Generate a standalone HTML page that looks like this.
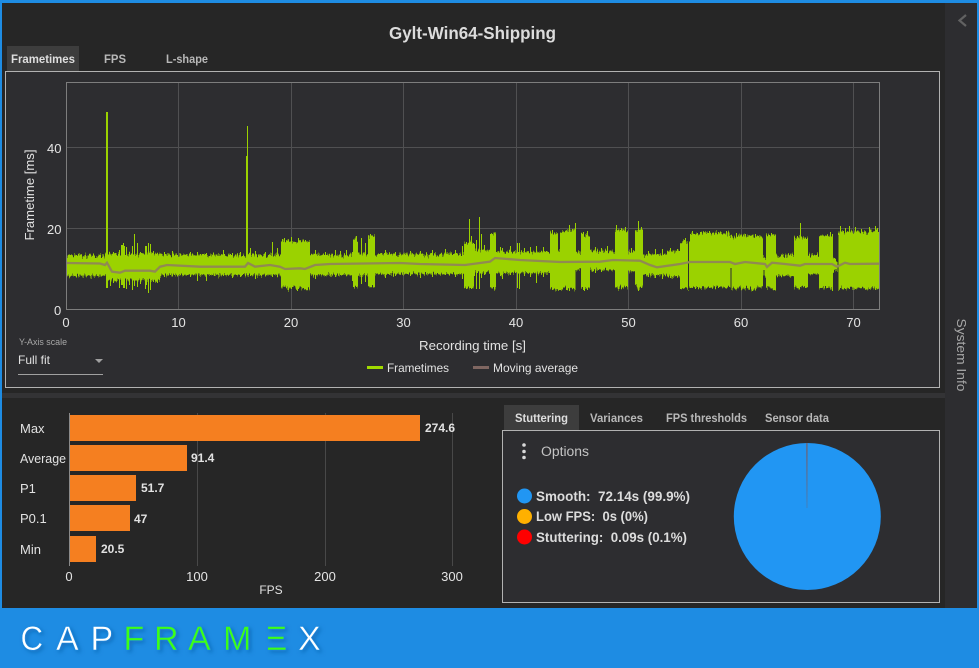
<!DOCTYPE html>
<html lang="en">
<head>
<meta charset="utf-8">
<title>CapFrameX</title>
<style>
html,body{margin:0;padding:0;width:979px;height:668px;overflow:hidden;background:#1e8ce3}
svg{display:block}
text{font-family:"Liberation Sans",sans-serif;fill:#e2e2e2}
.b{font-weight:bold}
.tab{font-weight:bold;font-size:12px;fill:#b8b8b8}
.tick{font-size:13px;fill:#e4e4e4}
.logo{font-size:34px;stroke:#1e8ce3;stroke-width:.5px}
</style>
</head>
<body>
<svg width="979" height="668" viewBox="0 0 979 668" xmlns="http://www.w3.org/2000/svg">
<defs>
<filter id="jag" filterUnits="userSpaceOnUse" x="60" y="200" width="825" height="105" color-interpolation-filters="sRGB">
<feTurbulence type="fractalNoise" baseFrequency="0.75 0.04" numOctaves="2" seed="7" result="n"/>
<feColorMatrix in="n" type="matrix" values="1 0 0 0 0  0 0 0 0 0.5  0 0 0 0 0  0 0 0 0 1" result="m"/>
<feDisplacementMap in="SourceGraphic" in2="m" scale="11" xChannelSelector="G" yChannelSelector="R"/>
</filter>
<filter id="ls" filterUnits="userSpaceOnUse" x="10" y="615" width="330" height="50">
<feDropShadow dx="2" dy="2" stdDeviation="2" flood-color="#0b5fa8" flood-opacity=".7"/>
</filter>
<clipPath id="plot"><rect x="67" y="83" width="812" height="226"/></clipPath>
<clipPath id="eclip"><rect x="268" y="620" width="20" height="36"/></clipPath>
</defs>

<!-- frame -->
<rect width="979" height="668" fill="#1e8ce3"/>
<rect x="2" y="3" width="975" height="605" fill="#262626"/>
<rect x="945" y="3" width="32" height="605" fill="#2d2d30"/>
<path d="M966 15 L959.500 20.500 L966 26" fill="none" stroke="#626262" stroke-width="2.200"/>
<text transform="translate(957 355) rotate(90)" font-size="13" text-anchor="middle" style="fill:#a8a8a8" textLength="73" lengthAdjust="spacingAndGlyphs">System Info</text>

<!-- title and tabs -->
<text x="389" y="39" class="b" font-size="17.500" style="fill:#dcdcdc" textLength="167" lengthAdjust="spacingAndGlyphs">Gylt-Win64-Shipping</text>
<rect x="7" y="46" width="72" height="25" fill="#3d3d3d"/>
<text x="11" y="63" class="tab" style="fill:#dedede" textLength="64" lengthAdjust="spacingAndGlyphs">Frametimes</text>
<text x="104" y="63" class="tab" textLength="22" lengthAdjust="spacingAndGlyphs">FPS</text>
<text x="166" y="63" class="tab" textLength="42" lengthAdjust="spacingAndGlyphs">L-shape</text>

<!-- chart box -->
<rect x="5.500" y="71.500" width="934" height="316" fill="#2d2d30" stroke="#b2b2b2"/>
<g stroke="#505052" fill="none" shape-rendering="crispEdges">
<path d="M178.500 83V309M291.500 83V309M403.500 83V309M516.500 83V309M628.500 83V309M741.500 83V309M853.500 83V309M67 147.500H879M67 228.500H879"/>
</g>
<g clip-path="url(#plot)">
<path filter="url(#jag)" fill="#9bd200" d="M66 255H106V254H160V255H281V241H310V255H353V238H358V254H368V236H375V254H464V243H474V250H490V233H496V252H550V232H558V251H560V231H575V252H581V235H590V251H612V252H615V231H628V252H635V230H643V255H667V251H680V241H690V233H730V236H763V256H766V236H776V255H794V238H808V255H819V236H833V260H838V232H882V288H838V271H833V288H819V274H808V288H794V276H776V288H766V276H763V288H680V277H667V275H643V287H635V271H628V288H615V270H590V288H581V270H575V289H550V273H496V288H490V272H474V288H464V274H375V287H368V275H358V287H353V275H310V288H281V275H160V280H108V276H60V255Z"/>
<rect x="106" y="112" width="2" height="176" fill="#9bd200"/>
<rect x="246" y="156" width="2" height="114" fill="#9bd200"/>
<rect x="247" y="126" width="1" height="30" fill="#9bd200"/>
<path fill="none" stroke="#9bd200" stroke-width="1" shape-rendering="crispEdges" d="M110.500 255V286M113.500 252V283M119.500 250V288M121.500 245V285M122.500 245V285M123.500 243V288M124.500 246V288M126.500 247V289M129.500 252V285M132.500 246V290M134.500 234V286M137.500 243V287M140.500 252V284M145.500 246V289M146.500 246V285M148.500 243V293M150.500 244V290M153.500 251V282M157.500 253V283M164.500 252V277M172.500 251V276M190.500 252V277M197.500 252V281M206.500 253V281M223.500 250V276M232.500 253V278M240.500 252V277M250.500 248V276M255.500 251V279M265.500 252V276M272.500 242V277M277.500 248V277M284.500 238V284M291.500 237V289M298.500 238V289M305.500 240V289M315.500 250V279M325.500 252V276M335.500 250V277M340.500 251V275M346.500 250V276M352.500 252V281M356.500 236V287M361.500 238V284M365.500 243V282M370.500 234V287M373.500 238V287M385.500 250V278M395.500 252V276M410.500 251V276M420.500 251V278M432.500 250V277M445.500 249V275M455.500 250V277M462.500 246V279M466.500 242V289M469.500 219V286M471.500 236V289M474.500 244V276M476.500 240V289M479.500 217V289M481.500 234V278M484.500 245V275M500.500 247V276M502.500 248V279M510.500 246V275M517.500 243V288M519.500 243V289M524.500 248V276M530.500 247V277M536.500 246V283M543.500 247V277M552.500 230V290M566.500 232V290M569.500 225V291M572.500 229V289M575.500 223V290M583.500 232V290M587.500 231V290M595.500 247V273M601.500 248V272M607.500 246V270M616.500 225V287M621.500 228V288M625.500 227V287M631.500 248V271M638.500 221V291M641.500 227V288M648.500 251V277M655.500 249V278M662.500 249V279M670.500 248V278M677.500 249V277M685.500 238V287M800.500 223V287M797.500 236V288M803.500 238V287M826.500 236V288M830.500 232V288M832.500 234V291M840.500 226V288M845.500 228V289M849.500 226V289M855.500 227V289M861.500 229V288M869.500 227V289M875.500 226V290M877.500 228V289M692.500 231V288M700.500 232V288M709.500 231V288M718.500 232V288M726.500 231V288M736.500 233V288M745.500 234V288M755.500 234V288M771.500 233V288"/>
<path fill="none" stroke="#2d2d30" stroke-width="1" shape-rendering="crispEdges" d="M731 268V290M764 230V258M764 270V290M688.500 232V290M838 235V290M576 270V292"/>
<polyline fill="none" stroke="#918a52" stroke-width="2.300" points="66,263 100,263.500 105,265 107,262.700 112,271.700 120,272.700 125,270.700 150,270.700 155,271.600 160,266.700 167,265 200,266.700 245,266.700 248,263 255,266.700 270,265 280,266.700 285,269 300,268.300 305,269 315,265 330,264 400,263 420,264 465,265 480,263 490,261.700 495,258 520,260 560,262 600,261.700 613,260 640,260.700 650,265 657,267.300 680,264 690,262 730,262 735,264 745,262 765,264 767,267 772,262.700 785,264 800,265.700 805,264 832,264 837,266.700 845,262.700 850,264 879,263.700"/>
</g>
<rect x="66.500" y="82.500" width="813" height="227" fill="none" stroke="#7d7d7d" shape-rendering="crispEdges"/>

<!-- chart axes -->
<text x="47" y="153" class="tick">40</text>
<text x="47" y="234" class="tick">20</text>
<text x="54" y="315" class="tick">0</text>
<text x="66" y="327" class="tick" text-anchor="middle">0</text>
<text x="178.500" y="327" class="tick" text-anchor="middle">10</text>
<text x="291" y="327" class="tick" text-anchor="middle">20</text>
<text x="403.500" y="327" class="tick" text-anchor="middle">30</text>
<text x="516" y="327" class="tick" text-anchor="middle">40</text>
<text x="628.500" y="327" class="tick" text-anchor="middle">50</text>
<text x="741" y="327" class="tick" text-anchor="middle">60</text>
<text x="853.500" y="327" class="tick" text-anchor="middle">70</text>
<text transform="translate(34 195) rotate(-90)" font-size="13" text-anchor="middle" textLength="91" lengthAdjust="spacingAndGlyphs">Frametime [ms]</text>
<text x="419" y="350" font-size="13" textLength="107" lengthAdjust="spacingAndGlyphs">Recording time [s]</text>
<rect x="367" y="366" width="16" height="3" fill="#a0da00"/>
<text x="387" y="372" font-size="12" textLength="62" lengthAdjust="spacingAndGlyphs">Frametimes</text>
<rect x="473" y="366" width="16" height="3" fill="#7f6661"/>
<text x="493" y="372" font-size="12" textLength="85" lengthAdjust="spacingAndGlyphs">Moving average</text>
<text x="19" y="345" font-size="9" style="fill:#a8a8a8" textLength="48" lengthAdjust="spacingAndGlyphs">Y-Axis scale</text>
<text x="18" y="364" font-size="12" textLength="32" lengthAdjust="spacingAndGlyphs">Full fit</text>
<path d="M95 359H103L99 363Z" fill="#a0a0a0"/>
<rect x="18" y="374" width="85" height="1" fill="#a0a0a0"/>

<!-- separator -->
<rect x="2" y="393" width="943" height="5" fill="#333335"/>

<!-- bar chart -->
<g stroke="#484848" shape-rendering="crispEdges" fill="none">
<path d="M197.500 413V566M325.500 413V566M452.500 413V566"/>
<path d="M69.500 413V566" stroke="#8a8a8a"/>
</g>
<g fill="#f57f20">
<rect x="70" y="415" width="350" height="26"/>
<rect x="70" y="445" width="117" height="26"/>
<rect x="70" y="475" width="66" height="26"/>
<rect x="70" y="505" width="60" height="26"/>
<rect x="70" y="536" width="26" height="26"/>
</g>
<g font-size="13">
<text x="20" y="433">Max</text>
<text x="20" y="463" textLength="46" lengthAdjust="spacingAndGlyphs">Average</text>
<text x="20" y="493">P1</text>
<text x="20" y="523">P0.1</text>
<text x="20" y="554">Min</text>
</g>
<g font-size="12">
<text x="425" y="432" class="b">274.6</text>
<text x="191" y="462" class="b">91.4</text>
<text x="141" y="492" class="b">51.7</text>
<text x="134" y="523" class="b">47</text>
<text x="101" y="553" class="b">20.5</text>
</g>
<text x="69" y="581" class="tick" text-anchor="middle">0</text>
<text x="197" y="581" class="tick" text-anchor="middle">100</text>
<text x="325" y="581" class="tick" text-anchor="middle">200</text>
<text x="452" y="581" class="tick" text-anchor="middle">300</text>
<text x="271" y="594" font-size="12" text-anchor="middle">FPS</text>

<!-- right panel -->
<rect x="504" y="405" width="75" height="25" fill="#3d3d3d"/>
<text x="515" y="422" class="tab" style="fill:#dedede" textLength="53" lengthAdjust="spacingAndGlyphs">Stuttering</text>
<text x="590" y="422" class="tab" textLength="53" lengthAdjust="spacingAndGlyphs">Variances</text>
<text x="666" y="422" class="tab" textLength="81" lengthAdjust="spacingAndGlyphs">FPS thresholds</text>
<text x="765" y="422" class="tab" textLength="64" lengthAdjust="spacingAndGlyphs">Sensor data</text>
<rect x="502.500" y="430.500" width="437" height="172" fill="#2d2d30" stroke="#b2b2b2"/>
<circle cx="524" cy="445" r="1.800" fill="#d8d8d8"/>
<circle cx="524" cy="451.500" r="1.800" fill="#d8d8d8"/>
<circle cx="524" cy="457.500" r="1.800" fill="#d8d8d8"/>
<text x="541" y="456" font-size="13.500" style="fill:#c4c4c4" textLength="48" lengthAdjust="spacingAndGlyphs">Options</text>
<circle cx="524.500" cy="496" r="7.500" fill="#2196f3"/>
<circle cx="524.500" cy="516.500" r="7.500" fill="#ffb000"/>
<circle cx="524.500" cy="537" r="7.500" fill="#ff0000"/>
<text x="536" y="501" font-size="13.500" class="b" style="fill:#dcdcdc" textLength="154" lengthAdjust="spacingAndGlyphs" xml:space="preserve">Smooth:  72.14s (99.9%)</text>
<text x="536" y="521" font-size="13.500" class="b" style="fill:#dcdcdc" textLength="112" lengthAdjust="spacingAndGlyphs" xml:space="preserve">Low FPS:  0s (0%)</text>
<text x="536" y="542" font-size="13.500" class="b" style="fill:#dcdcdc" textLength="151" lengthAdjust="spacingAndGlyphs" xml:space="preserve">Stuttering:  0.09s (0.1%)</text>
<circle cx="807.300" cy="516.500" r="73.500" fill="#2196f3"/>
<path d="M806.200 443 L807.600 443 L807.200 508 L806.800 508Z" fill="#6c6478"/>

<!-- logo -->
<g filter="url(#ls)">
<text transform="translate(20.500 650) scale(.92 1)" class="logo" style="fill:#ffffff">C</text>
<text x="56" y="650" class="logo" style="fill:#ffffff">A</text>
<text x="90.500" y="650" class="logo" style="fill:#ffffff">P</text>
<text x="123.500" y="650" class="logo" style="fill:#3cff14">F</text>
<text x="154" y="650" class="logo" style="fill:#3cff14">R</text>
<text x="188" y="650" class="logo" style="fill:#3cff14">A</text>
<text x="223" y="650" class="logo" style="fill:#3cff14">M</text>
<g clip-path="url(#eclip)"><text transform="translate(259.400 650) scale(1.25 1)" class="logo" style="fill:#3cff14">E</text></g>
<text x="298" y="650" class="logo" style="fill:#ffffff">X</text>
</g>
</svg>
</body>
</html>
